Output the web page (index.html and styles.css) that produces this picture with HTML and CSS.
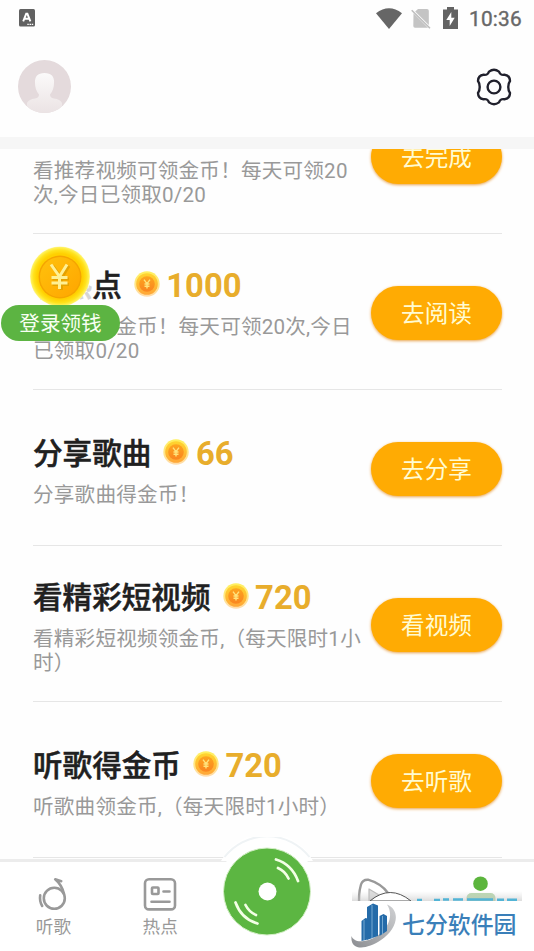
FILE: index.html
```html
<!DOCTYPE html>
<html lang="zh-CN">
<head>
<meta charset="utf-8">
<title>任务</title>
<link rel="stylesheet" href="styles.css">
</head>
<body>
<svg class="defs" width="0" height="0">
  <defs>
    <radialGradient id="rim"><stop offset="0.76" stop-color="#ffd000"/><stop offset="0.88" stop-color="#ffe21c"/><stop offset="0.97" stop-color="#fff15a"/><stop offset="1" stop-color="#fff6a8"/></radialGradient>
    <linearGradient id="face" x1="0" y1="0" x2="1" y2="1"><stop offset="0" stop-color="#ffc20c"/><stop offset="1" stop-color="#ffa500"/></linearGradient>
    <linearGradient id="edge" x1="0" y1="0" x2="0" y2="1"><stop offset="0" stop-color="#fff05c"/><stop offset="1" stop-color="#ffdcae"/></linearGradient>
    <linearGradient id="mid" x1="0" y1="0" x2="0" y2="1"><stop offset="0" stop-color="#ffd52e"/><stop offset="1" stop-color="#ffa638"/></linearGradient>
    <linearGradient id="core" x1="0" y1="0" x2="0" y2="1"><stop offset="0" stop-color="#fda51f"/><stop offset="1" stop-color="#fa8520"/></linearGradient>
    <linearGradient id="bust" x1="0" y1="0" x2="0" y2="1"><stop offset="0" stop-color="#fbfafa"/><stop offset="1" stop-color="#ebe3e4"/></linearGradient>
    <linearGradient id="swoosh" x1="0" y1="1" x2="1" y2="0"><stop offset="0" stop-color="#8b8d91"/><stop offset="1" stop-color="#d0d1d3"/></linearGradient>
    <linearGradient id="shade" x1="0" y1="0" x2="0" y2="1"><stop offset="0" stop-color="#ccc" stop-opacity="0"/><stop offset="1" stop-color="#bbb" stop-opacity=".5"/></linearGradient>
    <clipPath id="round"><circle cx="26.5" cy="26.5" r="26.5"/></clipPath>
    <symbol id="coin" viewBox="0 0 26 26">
      <circle cx="13" cy="13" r="12.7" fill="url(#edge)"/>
      <circle cx="13" cy="13" r="10.8" fill="url(#mid)"/>
      <circle cx="13" cy="13" r="7.8" fill="url(#core)"/>
      <path d="M10 8.6l3 4 3-4M13 12.6v5M10.5 13h5M10.5 15.3h5" fill="none" stroke="#ffe37c" stroke-width="1.4"/>
    </symbol>
  </defs>
</svg>
<div class="screen">
  <div class="status">
    <svg width="16" height="18" viewBox="0 0 16 18"><rect width="16" height="17.5" rx="1.5" fill="#616161"/><path d="M4.2 12.3L7.2 4.8h1.2l3 7.5M5.3 9.8h5" fill="none" stroke="#fff" stroke-width="1.9"/><path d="M8.3 15.3h6" stroke="#fff" stroke-width="1.3" stroke-dasharray="1.5 .7"/></svg>
    <div class="status-right">
      <svg width="26" height="21" viewBox="0 0 26 21"><path d="M0 5.3Q13-4.7 26 5.3L13 21z" fill="#666"/></svg>
      <svg class="sim" width="20" height="21" viewBox="0 0 20 21"><path d="M7 1h9q1.8 0 1.8 1.8V17L4.2 3.5zM2.5 5.2L17 19.7H4Q2.3 19.7 2.3 18z" fill="#c4c4c4"/><path d="M.7 2.2L19 20.3" stroke="#bdbdbd" stroke-width="1.5"/></svg>
      <svg class="battery" width="15" height="22" viewBox="0 0 15 22"><path d="M4 0h7v2.5h4V22H0V2.5h4z" fill="#636363"/><path d="M8.3 5L3.3 13h3.4v6l5-8.2H8.3z" fill="#fff"/></svg>
      <span class="clock">10:36</span>
    </div>
  </div>
  <header class="top">
    <svg width="53" height="53" viewBox="0 0 53 53"><g clip-path="url(#round)"><rect width="53" height="53" fill="#e4dadc"/><path d="M17 23q-.7-10 9.5-10T36 23q0 7-4 11.5 0 3.5 4 4 6 .5 8 4.5V53H9V43q2-4 8-4.5 4-.5 4-4-4-4.500-4-11.500z" fill="url(#bust)"/></g></svg>
    <svg width="36" height="38" viewBox="0 0 36 38" fill="none" stroke="#20202c" stroke-width="2.4"><path d="M13 3.600Q18 0 23 3.600C24.200 6.800 25.500 7.300 28.500 6.800Q33.800 7.300 34 13C31.700 16 31.700 22 34 25Q33.800 30.700 28.500 31.200C25.500 30.700 24.200 31.200 23 34.400Q18 38 13 34.400C11.800 31.200 10.500 30.700 7.500 31.200Q2.200 30.700 2 25C4.300 22 4.300 16 2 13Q2.200 7.300 7.500 6.800C10.500 7.300 11.800 6.800 13 3.600z" stroke-linejoin="round"/><circle cx="18" cy="19" r="6.400"/></svg>
  </header>
  <main class="list">
    <section class="row first">
      <div class="info"><div class="title"></div><p>看推荐视频可领金币！每天可领20<br>次,今日已领取0/20</p></div>
      <button>去完成</button>
    </section>
    <section class="row">
      <div class="info"><div class="title"><span><i>看热</i>点</span><svg class="coin"><use href="#coin"/></svg><b>1000</b></div><p>看热点领金币！每天可领20次,今日<br>已领取0/20</p></div>
      <button>去阅读</button>
    </section>
    <section class="row">
      <div class="info"><div class="title"><span>分享歌曲</span><svg class="coin"><use href="#coin"/></svg><b>66</b></div><p>分享歌曲得金币！</p></div>
      <button>去分享</button>
    </section>
    <section class="row">
      <div class="info"><div class="title"><span>看精彩短视频</span><svg class="coin"><use href="#coin"/></svg><b>720</b></div><p>看精彩短视频领金币,（每天限时1小<br>时）</p></div>
      <button>看视频</button>
    </section>
    <section class="row">
      <div class="info"><div class="title"><span>听歌得金币</span><svg class="coin"><use href="#coin"/></svg><b>720</b></div><p>听歌曲领金币,（每天限时1小时）</p></div>
      <button>去听歌</button>
    </section>
  </main>
  <nav class="tabs">
    <div class="tab">
      <svg width="36" height="36" viewBox="0 0 36 36" fill="none" stroke="#999" stroke-width="2.600" stroke-linecap="round" stroke-linejoin="round"><circle cx="19.300" cy="22.300" r="10.500"/><path d="M29 18Q27 9 20.200 3.300L26.200 5.200M5.200 19.200Q4.300 25 7.200 30"/></svg>
      <span>听歌</span>
    </div>
    <div class="tab">
      <svg width="36" height="36" viewBox="0 0 36 36" fill="none" stroke="#999" stroke-width="2.600" stroke-linecap="round"><rect x="3" y="3.200" width="30" height="30.200" rx="4"/><rect x="10" y="11.500" width="6.500" height="6.500" rx=".8"/><path d="M21.500 15.500h6M9.500 25.700h18"/></svg>
      <span>热点</span>
    </div>
    <div class="tab"></div>
    <div class="tab">
      <svg width="36" height="36" viewBox="0 0 36 36" fill="none" stroke="#999" stroke-width="2.400" stroke-linejoin="round"><path d="M3.500 30Q2 19 5 8.500 6.500 3.500 12 3.700 25 7.500 32 17q2 3-2 6.500-8 7-18 9.500-7 1-8.500-3z"/><path d="M13 13v12l10-6z" fill="#ddd" stroke="#bbb" stroke-width="1.200"/></svg>
    </div>
    <div class="tab">
      <svg width="36" height="36" viewBox="0 0 36 36"><circle cx="17.500" cy="7.700" r="7.300" fill="#5cb53d"/><rect x="3.500" y="17" width="29" height="18" rx="5" fill="#b9d8b0"/></svg>
    </div>
  </nav>
  <div class="disc">
    <svg width="110" height="110" viewBox="0 0 110 110"><path d="M9 24A52 52 0 0 1 101 24z" fill="#fff"/><path d="M12.500 20A54 54 0 0 1 97.500 20" fill="none" stroke="#eff3f5" stroke-width="2"/><circle cx="55" cy="54.500" r="50.500" fill="#fff"/><circle cx="55" cy="54.500" r="43.500" fill="#5cb642" stroke="#d5f0c8"/><circle cx="55.500" cy="54.500" r="9" fill="#fff"/><g fill="none" stroke="#f3ffe5" stroke-width="2.700" stroke-linecap="round"><path d="M64 22.500Q80 27.500 86 44M66 31Q73 34 76.500 41.500M23.500 65.500Q29.500 82 45.500 86.500M33.500 68Q37 75 44 78"/></g></svg>
  </div>
  <div class="float">
    <svg width="62" height="60" viewBox="0 0 62 60"><circle cx="31" cy="31.500" r="30" fill="url(#rim)"/><circle cx="31" cy="32" r="21.500" fill="#f5a400"/><circle cx="31" cy="32" r="20" fill="url(#face)"/><path d="M23 20l8.500 12L39 20M31.500 31v13M22.500 33h16.500M22.500 38.500h16.500" fill="none" stroke="#e5a200" stroke-width="3" transform="translate(1 1)"/><path d="M22 19.500l8.500 12L38 19.500M30.500 31v13M22.500 32.500h16M22.500 38h16" fill="none" stroke="#fff094" stroke-width="3"/></svg>
    <span>登录领钱</span>
  </div>
  <div class="mark">
    <svg width="184" height="10" viewBox="0 0 184 10"><path d="M2 0h170v10H2z" fill="url(#shade)"/><path d="M20 10Q40-7 61 10z" fill="#fff" stroke="#555" stroke-width="1"/><path d="M67 9h5M84 9h6M93 8.500h6M103 8.500h10M117 8.500h26M147 8.800h7M157 8.800h10" stroke="#52b4d6" stroke-width="2.400"/></svg>
    <div class="mark-body">
      <svg width="50" height="49" viewBox="0 0 50 49"><path d="M37 2.500C51 8 48 27 31 38 16 48 0 49 1.500 34 3 38 7 40 14 39 31 37 47 18 37 2.500z" fill="url(#swoosh)"/><path d="M11.500 19l4-3 4 1v20l-8 2zM17 5l6-3.500 5 2V34L17 38zM29.500 14l4-2 3.500 2v15l-7.500 5z" fill="#246ba9"/><path d="M14 18v20M22 3v33M32.500 14v18" stroke="#75aad2" stroke-width="1"/></svg>
      <span>七分软件园</span>
    </div>
  </div>
</div>
</body>
</html>
```
FILE: styles.css
```css
* { box-sizing: border-box; }
body { margin: 0; background: #fff; font-family: Roboto, "Noto Sans CJK SC", sans-serif; }
.defs { position: absolute; }
.screen { position: relative; width: 534px; height: 951px; overflow: hidden; display: flex; flex-direction: column; background: #fefefe; }
svg { display: block; flex: none; }
.status { height: 36px; padding: 0 12px 0 19px; display: flex; justify-content: space-between; align-items: center; }
.status-right { display: flex; align-items: center; }
.sim { margin-left: 9px; }
.battery { margin-left: 12px; }
.clock { margin-left: 11px; width: 53px; font-size: 20.8px; font-weight: 400; -webkit-text-stroke: .4px #686868; letter-spacing: .2px; line-height: 24px; color: #686868; margin-top: 2px; }
.top { height: 113px; padding: 0 22px 0 18px; border-bottom: 12px solid #f6f6f6; display: flex; justify-content: space-between; align-items: center; }
.list { height: 710px; overflow: hidden; padding: 0 32px 0 33px; }
.row { height: 156px; padding-top: 3px; border-bottom: 1px solid #e6e6e6; display: flex; align-items: center; justify-content: space-between; }
.first { margin-top: -71px; }
.info { width: 332px; white-space: nowrap; padding-top: 1px; }
.title { height: 45px; display: flex; align-items: center; font-size: 29.6px; font-weight: 500; line-height: 46px; color: #202020; -webkit-text-stroke: .5px; }
.title i { font-style: normal; color: #d5d5d5; }
.coin { width: 26px; height: 26px; margin: -4px 6px 0 12px; }
.title b { font-size: 32.8px; font-weight: 700; color: #e8ad2c; -webkit-text-stroke: 0; margin-left: .5px; }
.info p { margin: 6px 0 0; font-size: 20.6px; line-height: 24.4px; color: #999; letter-spacing: .2px; }
button { flex: none; width: 131px; height: 54px; border: 0; padding: 1px 0 0; border-radius: 27px; background: #ffab03; box-shadow: 0 1px 3px #e8a24a; color: #fffbd2; font: 23.6px/54px Roboto, "Noto Sans CJK SC", sans-serif; }
.tabs { height: 92px; border-top: 3px solid #ececec; display: flex; background: #fff; }
.tab { width: 106.8px; padding-top: 14px; display: flex; flex-direction: column; align-items: center; font-size: 17.6px; line-height: 26px; color: #999; }
.tab span { margin-top: 2px; }
.disc { position: absolute; left: 212px; top: 837px; }
.float { position: absolute; left: 1px; top: 245px; }
.float svg { margin-left: 28px; }
.float span { display: block; width: 119px; height: 36px; border-radius: 18px; background: #5cb442; color: #f8fff2; font-size: 20.6px; line-height: 38px; text-align: center; }
.mark { position: absolute; left: 350px; top: 891px; width: 184px; }
.mark-body { height: 50px; background: #fff; display: flex; align-items: center; }
.mark-body span { margin-left: 2px; font-size: 22.9px; font-weight: 500; line-height: 30px; color: #3a7fb9; }
```
